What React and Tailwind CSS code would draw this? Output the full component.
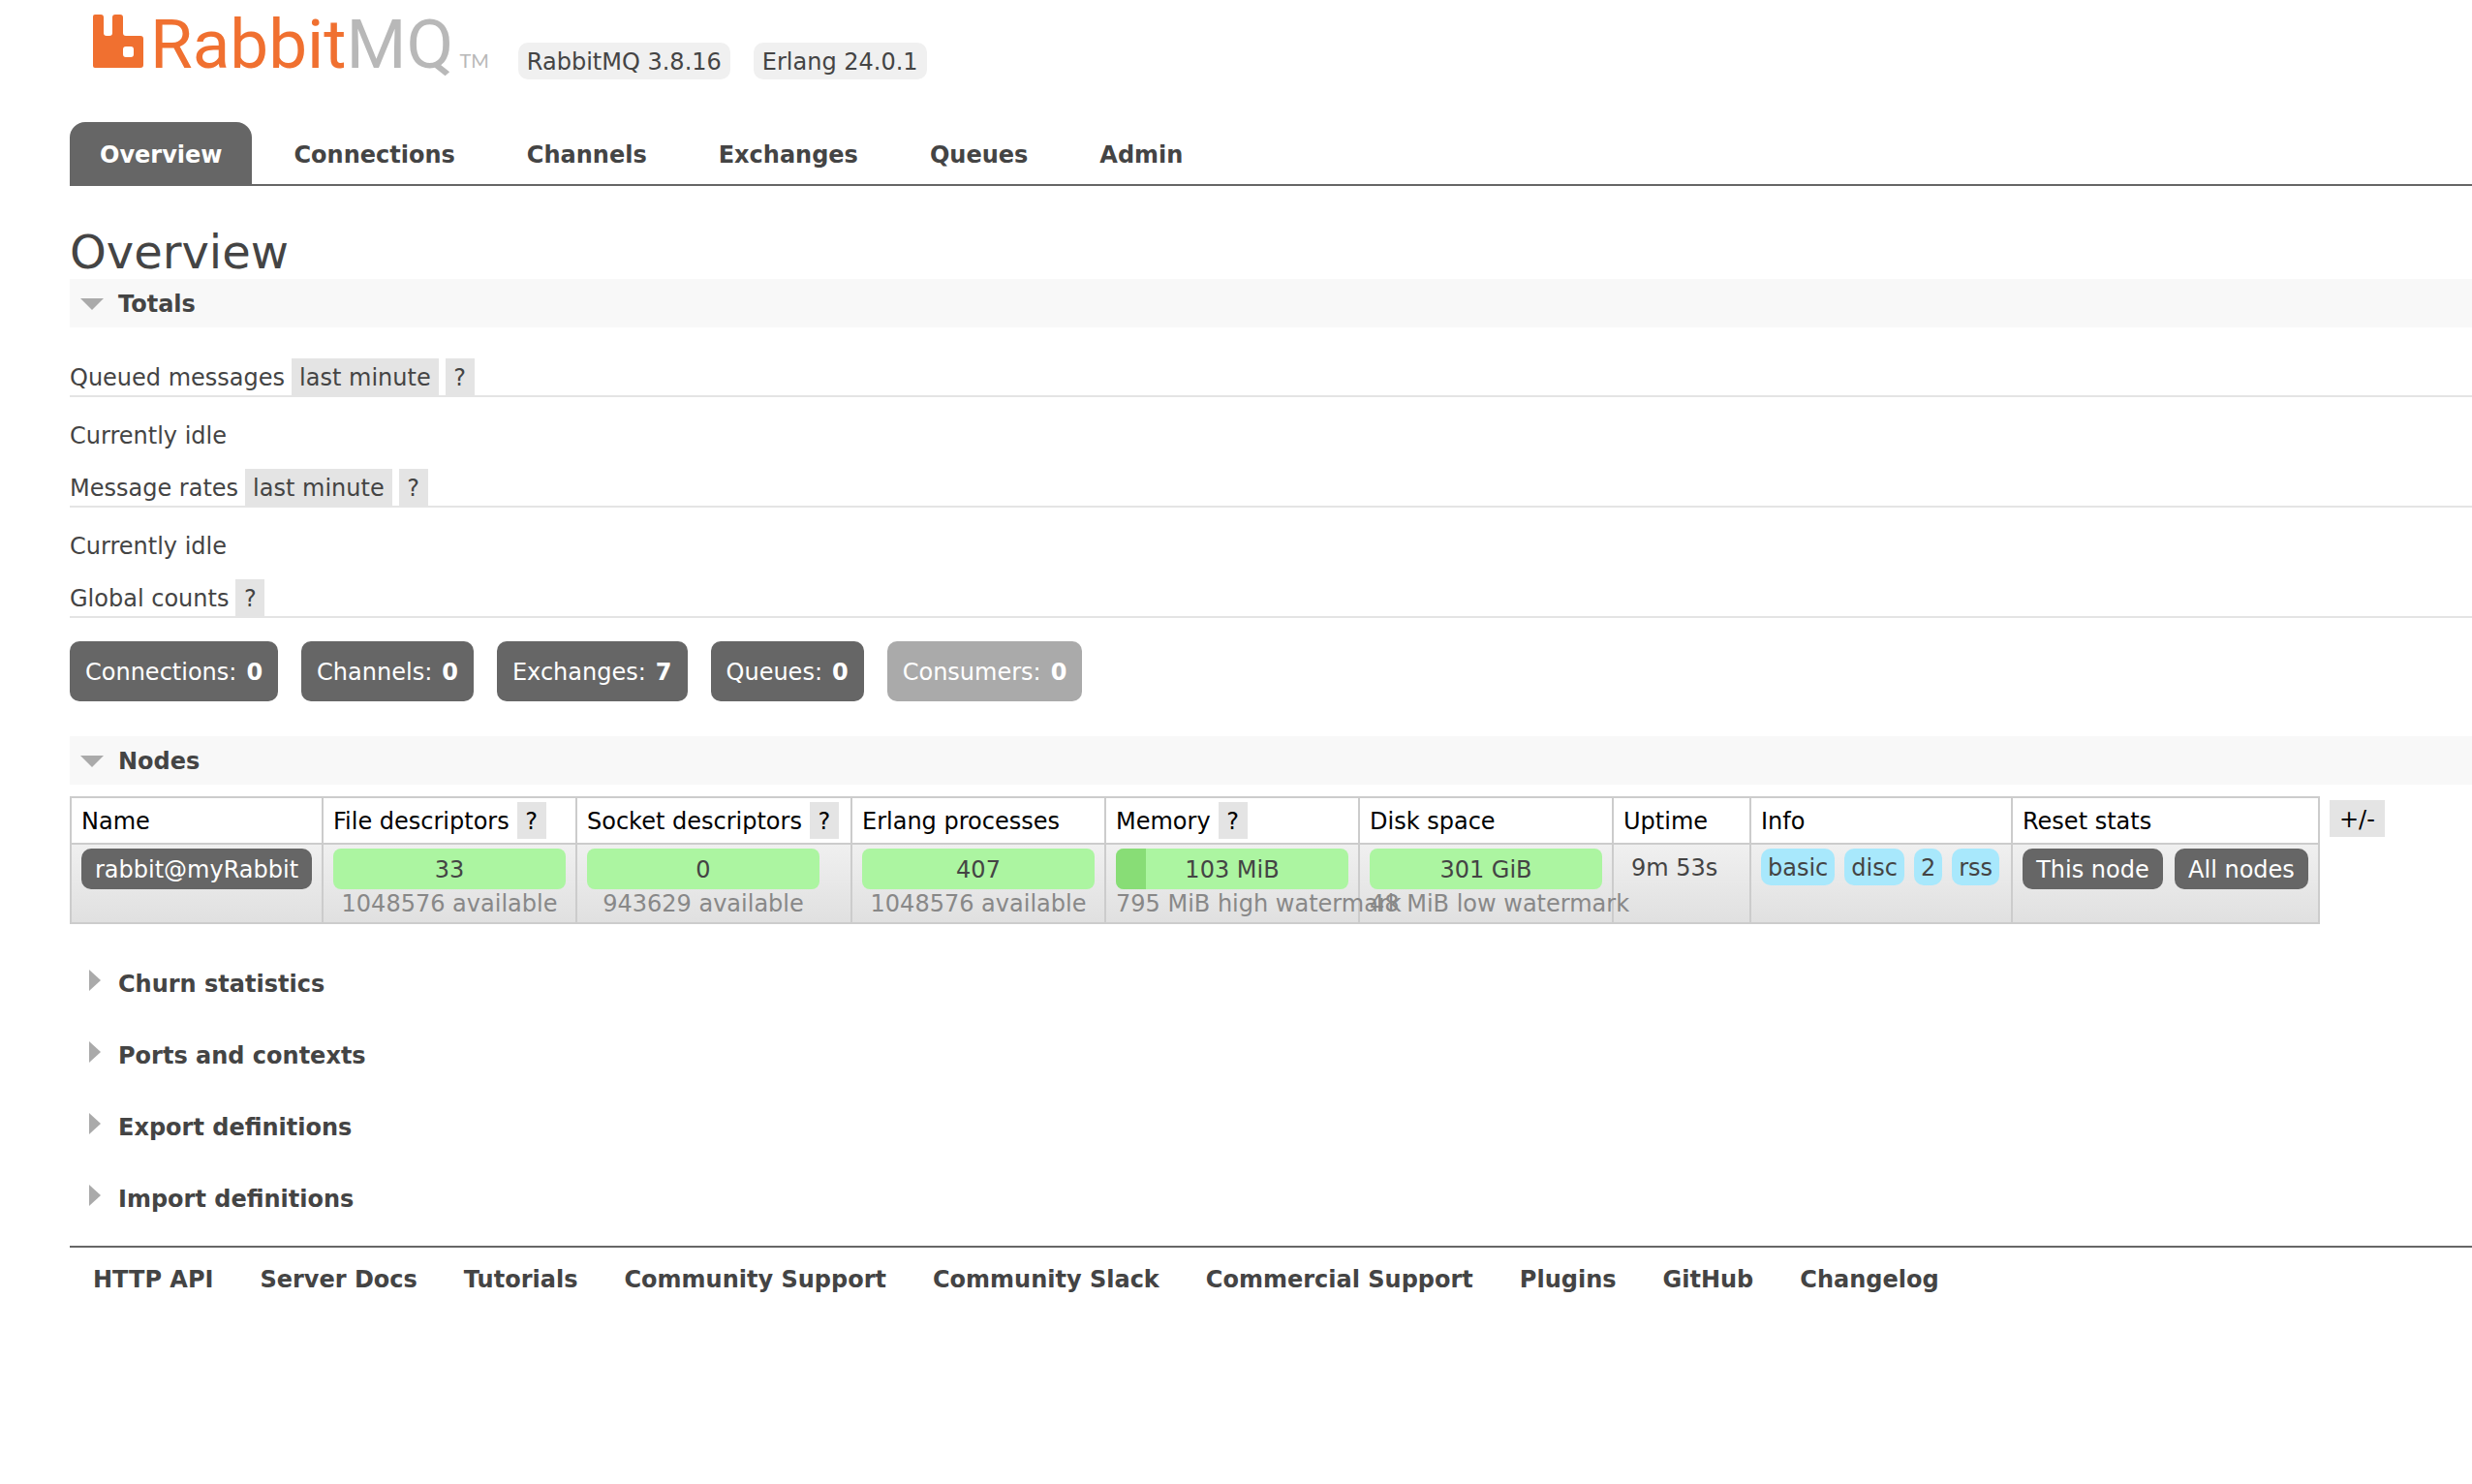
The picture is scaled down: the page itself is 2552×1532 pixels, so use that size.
import clsx from "clsx";

const TABS = ["Overview", "Connections", "Channels", "Exchanges", "Queues", "Admin"];

const COUNTS = [
  { label: "Connections", value: 0 },
  { label: "Channels", value: 0 },
  { label: "Exchanges", value: 7 },
  { label: "Queues", value: 0 },
  { label: "Consumers", value: 0, disabled: true },
];

const COLUMNS = [
  { title: "Name", width: "w-[260px]" },
  { title: "File descriptors", width: "w-[262px]", help: true },
  { title: "Socket descriptors", width: "w-[284px]", help: true },
  { title: "Erlang processes", width: "w-[262px]" },
  { title: "Memory", width: "w-[262px]", help: true },
  { title: "Disk space", width: "w-[262px]" },
  { title: "Uptime", width: "w-[142px]" },
  { title: "Info", width: "w-[270px]" },
  { title: "Reset stats", width: "w-[317px]" },
];

const STATS = [
  { value: "33", note: "1048576 available", percent: 0 },
  { value: "0", note: "943629 available", percent: 0 },
  { value: "407", note: "1048576 available", percent: 0 },
  { value: "103 MiB", note: "795 MiB high watermark", percent: 13 },
  { value: "301 GiB", note: "48 MiB low watermark", percent: 0 },
];

const SECTIONS = ["Churn statistics", "Ports and contexts", "Export definitions", "Import definitions"];

const LINKS = [
  "HTTP API",
  "Server Docs",
  "Tutorials",
  "Community Support",
  "Community Slack",
  "Commercial Support",
  "Plugins",
  "GitHub",
  "Changelog",
];

const Logo = () => (
  <a href="#/" className="flex items-start">
    <svg className="mt-[15px] h-[56px] w-[53px]" viewBox="0 0 53 56" aria-hidden="true">
      <path
        fill="#f07030"
        fillRule="evenodd"
        d="M2 0H8Q11 0 11 3V19Q11 22 14 22H17Q20 22 20 19V3Q20 0 23 0H28Q31 0 31 3V19Q31 22 34 22H49Q52 22 52 25V52Q52 55 49 55H2Q0 55 0 53V2Q0 0 2 0ZM34 33Q31 33 31 36V41Q31 44 34 44H39Q42 44 42 41V36Q42 33 39 33Z"
      />
    </svg>
    <span className="ml-[6px] font-['Liberation_Sans_Narrow','Roboto',sans-serif] text-[71px] leading-[92px] text-[#f07030]">
      Rabbit<span className="text-[#b8b8b8]">MQ</span>
    </span>
    <span className="ml-[6px] mt-[50px] font-['Lato',sans-serif] text-[20px] leading-6 text-[#b8b8b8]">TM</span>
  </a>
);

const Version = ({ children }) => (
  <li className="rounded-[10px] bg-[#f0f0f0] px-[9px] pt-[5px] pb-[3px]">{children}</li>
);

const Help = () => (
  <button type="button" className="w-[30px] bg-[#e4e4e4] pt-[5px] pb-[3px] text-center">
    ?
  </button>
);

const OpenSection = ({ title }) => (
  <h2 className="bg-[#f8f8f8] font-bold">
    <button type="button" className="flex w-full items-center pt-[11px] pb-[9px]">
      <svg className="ml-[11px] h-3 w-6" viewBox="0 0 24 12" aria-hidden="true">
        <path d="M0 0H24L12 12Z" fill="#aaa" />
      </svg>
      <span className="ml-[15px]">{title}</span>
    </button>
  </h2>
);

const ClosedSection = ({ title }) => (
  <h2 className="font-bold">
    <button type="button" className="flex items-start">
      <svg className="ml-5 h-[22px] w-3" viewBox="0 0 12 22" aria-hidden="true">
        <path d="M0 0L12 11L0 22Z" fill="#aaa" />
      </svg>
      <span className="ml-[18px]">{title}</span>
    </button>
  </h2>
);

const Heading = ({ title, range }) => (
  <h3 className="flex gap-[7px] border-b-2 border-[#e4e4e4]">
    <span className="pt-[5px] pb-[3px]">{title}</span>
    {range && (
      <button type="button" className="bg-[#e4e4e4] px-2 pt-[5px] pb-[3px]">
        {range}
      </button>
    )}
    <Help />
  </h3>
);

const Stat = ({ stat }) => (
  <div className="w-60 text-center whitespace-nowrap">
    <div className="relative overflow-hidden rounded-lg bg-[#acf5a1] pt-[7px] pb-[5px]">
      <div className="absolute inset-y-0 left-0 bg-[#88dd76]" style={{ width: `${stat.percent}%` }} />
      <span className="relative">{stat.value}</span>
    </div>
    <div className="text-[#888]">{stat.note}</div>
  </div>
);

const Tag = ({ children }) => (
  <abbr className="rounded-[10px] bg-[#a8e8fc] px-[7px] pt-[5px] pb-[3px] no-underline">{children}</abbr>
);

const cell = "border-2 border-[#ccc] px-[10px] pt-1 text-left align-top";

const NodesTable = () => (
  <div className="mt-3 flex items-start gap-[10px] text-black">
    <table className="w-[2322px] table-fixed border-collapse">
      <thead>
        <tr className="h-12">
          {COLUMNS.map((col) => (
            <th key={col.title} className={clsx(cell, col.width, "font-normal whitespace-nowrap")}>
              <div className="flex gap-2">
                <span className="pt-[5px] pb-[3px]">{col.title}</span>
                {col.help && <Help />}
              </div>
            </th>
          ))}
        </tr>
      </thead>
      <tbody>
        <tr className="h-[82px] bg-linear-to-b from-[#f0f0f0] to-[#e0e0e0] text-[#444]">
          <td className={cell}>
            <a href="#/nodes" className="block rounded-[10px] bg-[#666] pt-[7px] pb-[5px] text-center text-white">
              rabbit@myRabbit
            </a>
          </td>
          {STATS.map((stat, i) => (
            <td key={i} className={cell}>
              <Stat stat={stat} />
            </td>
          ))}
          <td className={cell}>
            <div className="px-2 pt-[5px] whitespace-nowrap">9m 53s</div>
          </td>
          <td className={cell}>
            <div className="flex gap-[10px]">
              <Tag>basic</Tag>
              <Tag>disc</Tag>
              <Tag>2</Tag>
              <Tag>rss</Tag>
            </div>
          </td>
          <td className={cell}>
            <div className="flex gap-3 whitespace-nowrap">
              <button type="button" className="grow rounded-[10px] bg-[#666] pt-[7px] pb-[5px] text-white">
                This node
              </button>
              <button type="button" className="grow rounded-[10px] bg-[#666] pt-[7px] pb-[5px] text-white">
                All nodes
              </button>
            </div>
          </td>
        </tr>
      </tbody>
    </table>
    <button type="button" className="mt-1 bg-[#e4e4e4] px-[10px] pt-[5px] pb-[3px]">
      +/-
    </button>
  </div>
);

const App = () => {
  return (
    <div className="min-h-screen bg-white pl-[72px] font-['DejaVu_Sans',sans-serif] text-[24px] leading-[30px] text-[#444]">
      <header>
        <div className="flex h-[126px] items-start pl-6">
          <Logo />
          <ul className="mt-11 ml-[30px] flex gap-6">
            <Version>RabbitMQ 3.8.16</Version>
            <Version>Erlang 24.0.1</Version>
          </ul>
        </div>
        <nav className="border-b-2 border-[#666] font-bold">
          <ul className="flex gap-3">
            {TABS.map((tab) => (
              <li key={tab}>
                <a
                  href={`#/${tab.toLowerCase()}`}
                  className={clsx(
                    "block px-[31px] pt-[19px] pb-[15px]",
                    tab === "Overview" && "rounded-t-2xl bg-[#666] text-white"
                  )}
                >
                  {tab}
                </a>
              </li>
            ))}
          </ul>
        </nav>
      </header>

      <main>
        <h1 className="mt-10 text-[48px] leading-[56px]">Overview</h1>
        <OpenSection title="Totals" />
        <section className="mt-8">
          <Heading title="Queued messages" range="last minute" />
          <p className="pt-[25px] pb-[19px]">Currently idle</p>
          <Heading title="Message rates" range="last minute" />
          <p className="pt-[25px] pb-[19px]">Currently idle</p>
          <Heading title="Global counts" />
          <ul className="mt-6 mb-9 flex gap-6">
            {COUNTS.map((count) => (
              <li key={count.label}>
                <a
                  href={`#/${count.label.toLowerCase()}`}
                  className={clsx(
                    "flex gap-[10px] rounded-[10px] px-4 pt-[17px] pb-[15px] text-white",
                    count.disabled ? "bg-[#aaa]" : "bg-[#666]"
                  )}
                >
                  {count.label}: <strong>{count.value}</strong>
                </a>
              </li>
            ))}
          </ul>
        </section>

        <OpenSection title="Nodes" />
        <NodesTable />

        <div className="mt-[47px] mb-[33px] grid gap-11">
          {SECTIONS.map((title) => (
            <ClosedSection key={title} title={title} />
          ))}
        </div>
      </main>

      <footer className="border-t-2 border-[#666] pt-[18px] font-bold">
        <ul className="flex gap-12 pl-6">
          {LINKS.map((link) => (
            <li key={link}>
              <a href="#/">{link}</a>
            </li>
          ))}
        </ul>
      </footer>
    </div>
  );
};

export default App;
